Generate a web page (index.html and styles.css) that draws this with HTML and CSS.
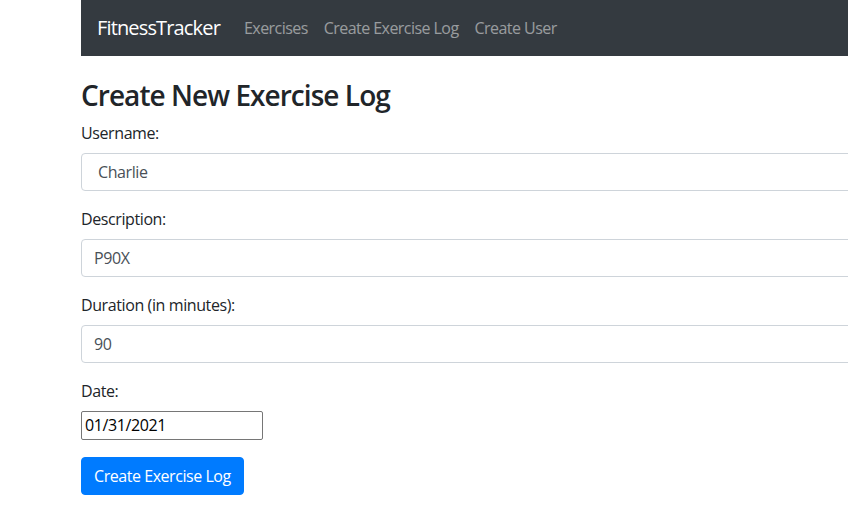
FILE: index.html
```html
<!DOCTYPE html>
<html>
<head>
<meta charset="utf-8">
<link rel="stylesheet" href="styles.css">
</head>
<body>
<div class="page">
  <nav class="navbar">
    <a class="brand">FitnessTracker</a>
    <ul class="nav">
      <li><a class="nav-link">Exercises</a></li>
      <li><a class="nav-link">Create Exercise Log</a></li>
      <li><a class="nav-link">Create User</a></li>
    </ul>
  </nav>
  <div class="spacer"></div>
  <h3 class="title">Create New Exercise Log</h3>
  <form class="form">
    <div class="form-group">
      <label class="label">Username:</label>
      <div class="control select"><span class="select-text">Charlie</span></div>
    </div>
    <div class="form-group">
      <label class="label">Description:</label>
      <div class="control">P90X</div>
    </div>
    <div class="form-group">
      <label class="label">Duration (in minutes):</label>
      <div class="control">90</div>
    </div>
    <div class="form-group">
      <label class="label">Date:</label>
      <div class="date-wrap"><div class="date-input">01/31/2021</div></div>
    </div>
    <div class="form-group">
      <button type="button" class="btn">Create Exercise Log</button>
    </div>
  </form>
</div>
</body>
</html>
```

FILE: styles.css
```css
html, body {
  margin: 0;
  padding: 0;
  overflow: hidden;
  background: #fff;
}
body {
  font-family: "Open Sans", "Noto Sans", sans-serif;
  font-size: 16px;
  line-height: 1.5;
  letter-spacing: -0.4px;
  color: #212529;
}
.page {
  margin-left: 81px;
  width: 1100px;
}
.navbar {
  background: #343a40;
  height: 56px;
  display: flex;
  align-items: center;
  padding: 0 16px;
  box-sizing: border-box;
}
.brand {
  color: #fff;
  font-size: 20px;
  line-height: 30px;
  letter-spacing: -0.85px;
  margin-right: 16px;
}
.nav {
  list-style: none;
  margin: 0;
  padding: 0;
  display: flex;
}
.nav-link {
  display: block;
  padding: 8px 8px;
  letter-spacing: -0.55px;
  color: rgba(255,255,255,.5);
}
.spacer {
  height: 23px;
}
.title {
  font-size: 28px;
  font-weight: 600;
  line-height: 1.2;
  letter-spacing: -0.95px;
  margin: 0 0 8px;
}
.form { margin: 0; }
.form-group {
  margin-bottom: 16px;
}
.label {
  display: block;
  margin-bottom: 8px;
}
.control {
  height: 38px;
  box-sizing: border-box;
  border: 1px solid #ced4da;
  border-radius: 4px;
  padding: 6px 12px;
  color: #495057;
  line-height: 24px;
}
.select .select-text {
  padding-left: 4px;
}
.date-wrap {
  height: 30px;
}
.date-input {
  width: 182px;
  height: 29px;
  box-sizing: border-box;
  border: 1px solid #767676;
  border-radius: 2px;
  padding: 1px 3px;
  line-height: 25px;
  color: #000;
}
.btn {
  font-family: inherit;
  font-size: 16px;
  line-height: 24px;
  letter-spacing: -0.45px;
  color: #fff;
  background: #007bff;
  border: 1px solid #007bff;
  border-radius: 4px;
  padding: 6px 12px;
  cursor: pointer;
}
```
